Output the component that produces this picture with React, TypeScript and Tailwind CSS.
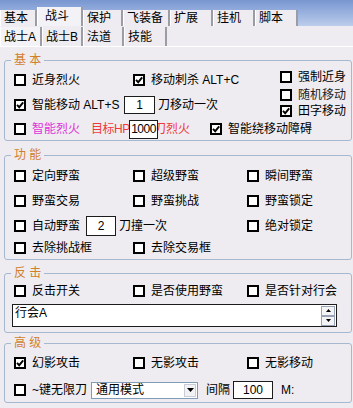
import React from 'react';

const font = "font-['Liberation_Sans','Noto_Sans_CJK_SC',sans-serif]";

const Check: React.FC<{ on?: boolean }> = ({ on }) => (
  <span className="w-[12px] h-[12px] border-2 border-black bg-white flex items-center justify-center shrink-0">
    {on && (
      <svg width="8" height="8" viewBox="0 0 8 8">
        <path d="M1 3.8 L3.2 6.2 L7.2 1.4" stroke="#000" strokeWidth="1.9" fill="none" />
      </svg>
    )}
  </span>
);

const Opt: React.FC<{ label: string; on?: boolean; className?: string; textClass?: string }> = ({
  label,
  on,
  className = '',
  textClass = '',
}) => (
  <div className={`flex items-center gap-[6px] ${className}`}>
    <Check on={on} />
    <span className={`whitespace-nowrap ${textClass}`}>{label}</span>
  </div>
);

const Box: React.FC<{ value: string; className?: string }> = ({ value, className = '' }) => (
  <div
    className={`bg-white border border-[#1c1c1c] flex items-center justify-center text-[12px] shrink-0 relative z-10 ${className}`}
  >
    {value}
  </div>
);

const Group: React.FC<{ title: string; className?: string; children: React.ReactNode }> = ({
  title,
  className = '',
  children,
}) => (
  <div className={`relative ml-[4px] mr-[1px] border border-[#a6b8cf] rounded-[3px] pl-[9px] ${className}`}>
    <span className="absolute -top-[8px] left-[6px] px-[3px] bg-[#eeecf1] text-[#d27f2a] leading-[14px] whitespace-pre">
      {title}
    </span>
    {children}
  </div>
);

const topTabs = [
  { t: '基本', w: 'w-[37px]' },
  { t: '战斗', w: 'w-[46px]', sel: true },
  { t: '保护', w: 'w-[40px]' },
  { t: '飞装备', w: 'w-[47px]' },
  { t: '扩展', w: 'w-[43px]' },
  { t: '挂机', w: 'w-[42px]' },
  { t: '脚本', w: 'w-[43px]' },
];

const subTabs = [
  { t: '战士A', w: 'w-[42px]', sel: true },
  { t: '战士B', w: 'w-[41px]' },
  { t: '法道', w: 'w-[41px]' },
  { t: '技能', w: 'w-[43px]' },
];

export default function App() {
  return (
    <div className={`w-[353px] h-[408px] bg-[#eeecf1] overflow-hidden text-[12px] leading-[14px] text-black ${font}`}>
      {/* top tabs */}
      <div className="h-[26px] bg-gradient-to-b from-[#7896d0] to-[#bccdec] flex items-end">
        {topTabs.map((tab) => (
          <div
            key={tab.t}
            className={`${tab.w} ${
              tab.sel ? 'h-[19px] bg-[#f3f2f6] pt-[2px]' : 'h-[16px] bg-[#eeecf1] pt-[1px]'
            } border-l border-white border-r-2 border-r-[#9c9ca4] pl-[3px] whitespace-nowrap ${
              tab.sel ? 'pl-[7px]' : ''
            }`}
          >
            {tab.t}
          </div>
        ))}
      </div>
      {/* sub tabs */}
      <div className="h-[21px] flex items-stretch border-b border-white pt-[1px]">
        {subTabs.map((tab) => (
          <div
            key={tab.t}
            className={`${tab.w} ${
              tab.sel ? 'bg-[#f3f2f6]' : ''
            } border-l border-white border-r-2 border-r-[#9c9ca4] pl-[3px] pt-[3px] whitespace-nowrap`}
          >
            {tab.t}
          </div>
        ))}
      </div>

      {/* 基本 */}
      <Group title="基 本" className="mt-[13px]">
        <div className="flex">
          <div className="w-[266px] pt-[7px]">
            <div className="h-[24px] flex items-center">
              <Opt label="近身烈火" className="w-[119px]" />
              <Opt label="移动刺杀 ALT+C" on />
            </div>
            <div className="h-[26px] flex items-center">
              <Opt label="智能移动 ALT+S" on className="w-[110px]" />
              <Box value="1" className="w-[31px] h-[18px]" />
              <span className="ml-[3px]">刀移动一次</span>
            </div>
          </div>
          <div className="pt-[7px]">
            <Opt label="强制近身" className="h-[18px]" />
            <Opt label="随机移动" className="h-[18px]" textClass="text-[#222]" />
            <Opt label="田字移动" on className="h-[14px]" />
          </div>
        </div>
        <div className="h-[22px] flex items-center">
          <div className="w-[196px] flex items-center">
            <Opt label="智能烈火" className="w-[77px]" textClass="text-[#e030d8]" />
            <span className="text-[#f03a3a] whitespace-nowrap w-[38px] tracking-[-0.5px]">目标HP</span>
            <Box value="1000" className="w-[29px] h-[19px] tracking-[-0.5px]" />
            <span className="text-[#f03a3a] -ml-[4px] whitespace-nowrap">刀烈火</span>
          </div>
          <Opt label="智能绕移动障碍" on />
        </div>
      </Group>

      {/* 功能 */}
      <Group title="功 能" className="mt-[14px] pt-[7px] pb-[1px]">
        <div className="h-[25px] flex items-center">
          <Opt label="定向野蛮" className="w-[119px]" />
          <Opt label="超级野蛮" className="w-[114px]" />
          <Opt label="瞬间野蛮" />
        </div>
        <div className="h-[25px] flex items-center">
          <Opt label="野蛮交易" className="w-[119px]" />
          <Opt label="野蛮挑战" className="w-[114px]" />
          <Opt label="野蛮锁定" />
        </div>
        <div className="h-[25px] flex items-center">
          <div className="w-[233px] flex items-center">
            <Opt label="自动野蛮" className="w-[72px]" />
            <Box value="2" className="w-[30px] h-[20px]" />
            <span className="ml-[3px]">刀撞一次</span>
          </div>
          <Opt label="绝对锁定" />
        </div>
        <div className="h-[20px] flex items-center">
          <Opt label="去除挑战框" className="w-[119px]" />
          <Opt label="去除交易框" />
        </div>
      </Group>

      {/* 反击 */}
      <Group title="反 击" className="mt-[13px] pt-[5px] pb-[5px]">
        <div className="h-[23px] flex items-center">
          <Opt label="反击开关" className="w-[119px]" />
          <Opt label="是否使用野蛮" className="w-[114px]" />
          <Opt label="是否针对行会" />
        </div>
        <div className="mt-[2px] -ml-[2px] w-[325px] h-[23px] bg-white border border-[#1c1c1c] flex justify-between">
          <span className="pl-[2px] pt-[1px]">行会A</span>
          <div className="flex flex-col justify-center pr-[1px]">
            <div className="w-[14px] h-[10px] border border-[#9aa3b5] bg-[#f4f4f4] flex items-center justify-center">
              <svg width="5" height="3" viewBox="0 0 5 3">
                <path d="M0 3 L2.5 0 L5 3 Z" fill="#000" />
              </svg>
            </div>
            <div className="w-[14px] h-[10px] border border-[#9aa3b5] bg-[#f4f4f4] flex items-center justify-center">
              <svg width="5" height="3" viewBox="0 0 5 3">
                <path d="M0 0 L2.5 3 L5 0 Z" fill="#000" />
              </svg>
            </div>
          </div>
        </div>
      </Group>

      {/* 高级 */}
      <Group title="高 级" className="mt-[10px] pt-[7px] flex flex-col gap-[3px]">
        <div className="h-[24px] flex items-center">
          <Opt label="幻影攻击" on className="w-[119px]" />
          <Opt label="无影攻击" className="w-[114px]" />
          <Opt label="无影移动" />
        </div>
        <div className="h-[24px] flex items-center">
          <Opt label="~键无限刀" className="w-[77px]" />
          <div className="w-[107px] h-[17px] bg-white border border-[#7f9db9] flex items-center justify-between">
            <span className="pl-[4px]">通用模式</span>
            <div className="w-[12px] h-[13px] mr-[1px] bg-[#f2f1f4] border border-[#c8cdd8] flex items-center justify-center">
              <svg width="7" height="4" viewBox="0 0 7 4">
                <path d="M0 0 L3.5 4 L7 0 Z" fill="#000" />
              </svg>
            </div>
          </div>
          <span className="ml-[8px]">间隔</span>
          <Box value="100" className="ml-[3px] w-[40px] h-[18px]" />
          <span className="ml-[8px]">M:</span>
        </div>
      </Group>
    </div>
  );
}
